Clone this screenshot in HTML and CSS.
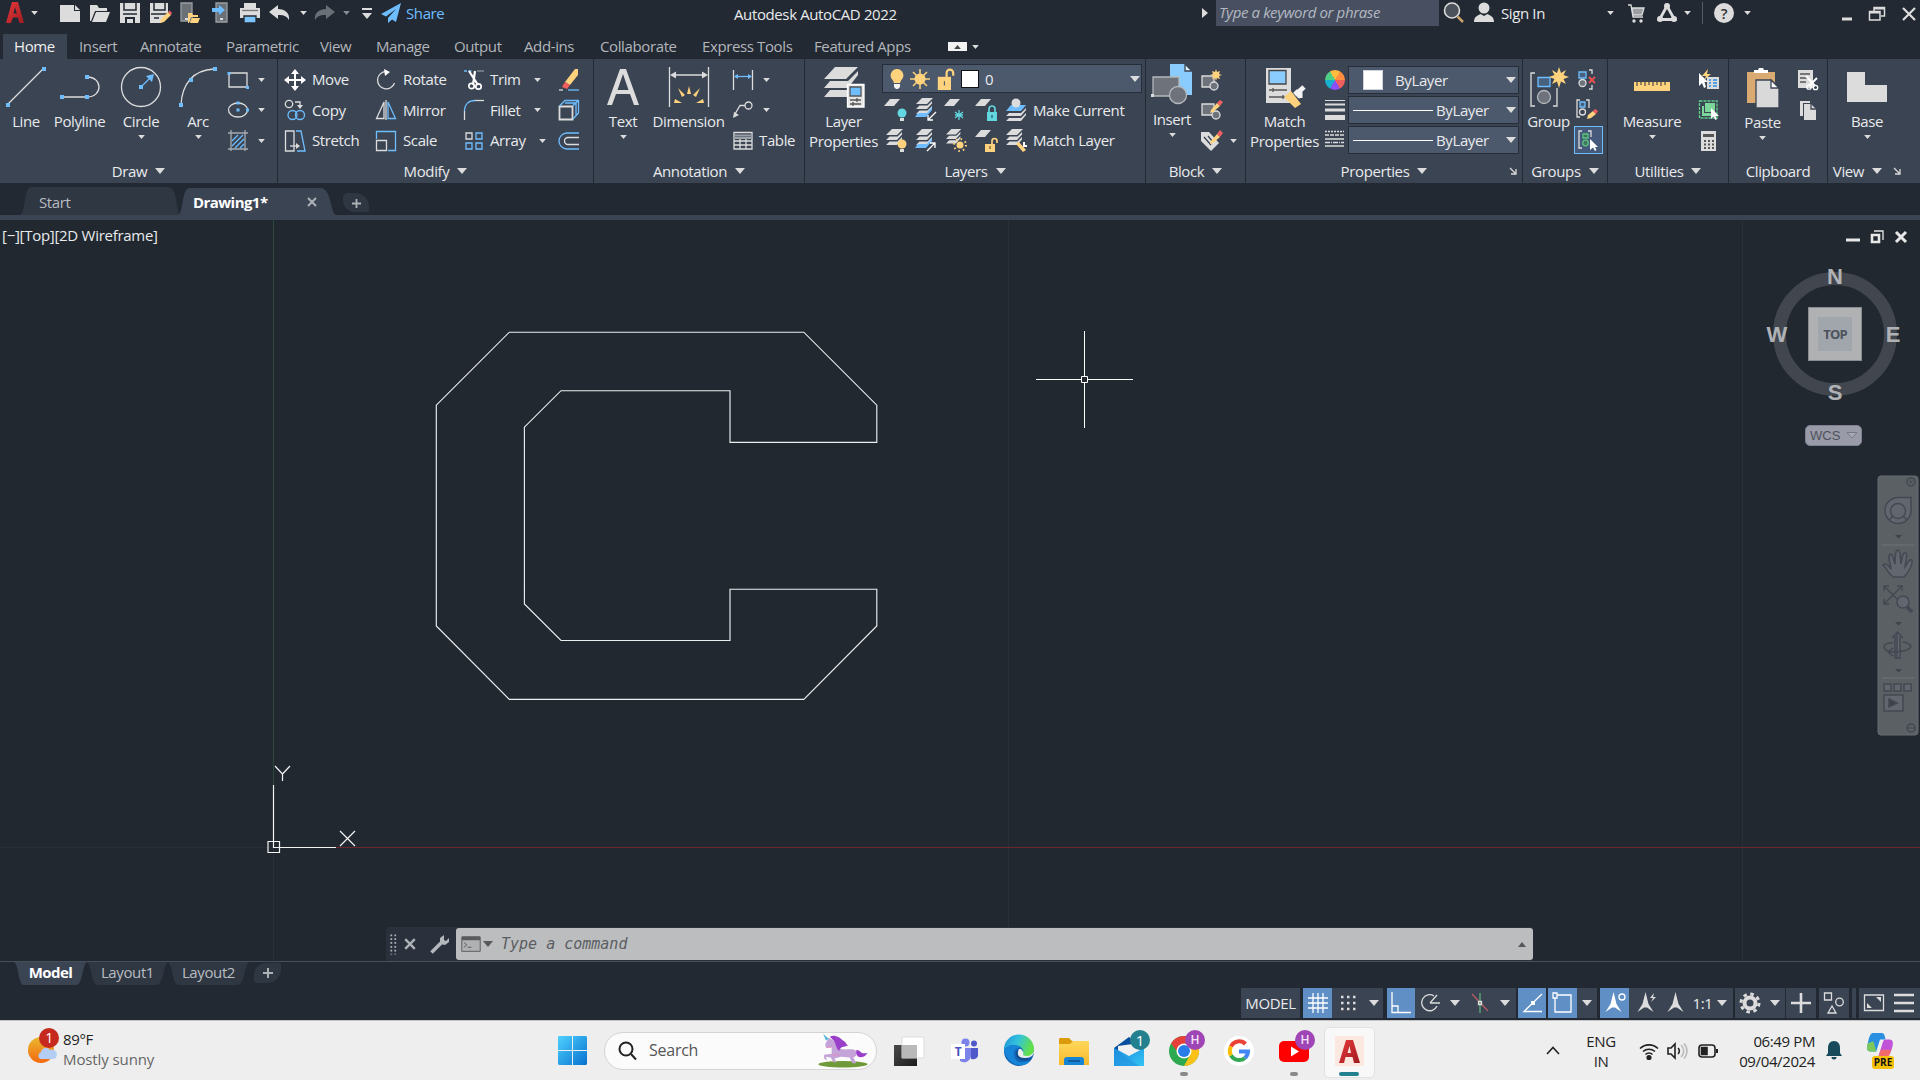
FILE: index.html
```html
<!DOCTYPE html>
<html lang="en">
<head>
<meta charset="utf-8">
<title>Autodesk AutoCAD 2022</title>
<link rel="stylesheet" href="styles.css">
</head>
<body>
<svg class="defs" width="0" height="0">
  <defs>
    <linearGradient id="gRed" x1="0" y1="0" x2="1" y2="1"><stop offset="0" stop-color="#e8383a"/><stop offset="1" stop-color="#a01c22"/></linearGradient>
    <linearGradient id="gWin" x1="0" y1="0" x2="1" y2="1"><stop offset="0" stop-color="#4fd2ff"/><stop offset="1" stop-color="#0670cf"/></linearGradient>
    <linearGradient id="gSun" x1="0" y1="0" x2="0" y2="1"><stop offset="0" stop-color="#e9b92f"/><stop offset="1" stop-color="#f4690f"/></linearGradient>
    <linearGradient id="gEdge" x1="0" y1="0" x2="1" y2="0.3"><stop offset="0" stop-color="#1d8fd8"/><stop offset=".5" stop-color="#34c3dd"/><stop offset="1" stop-color="#62e04a"/></linearGradient>
    <linearGradient id="gFold" x1="0" y1="0" x2="0" y2="1"><stop offset="0" stop-color="#ffd85c"/><stop offset="1" stop-color="#f8b92c"/></linearGradient>
    <linearGradient id="gMail" x1="0" y1="0" x2="1" y2="1"><stop offset="0" stop-color="#1a8fe0"/><stop offset="1" stop-color="#35c4f3"/></linearGradient>
    <linearGradient id="gDark" x1="0" y1="0" x2="1" y2="1"><stop offset="0" stop-color="#4a4a4a"/><stop offset="1" stop-color="#1c1c1c"/></linearGradient>
  </defs>
  <symbol id="caret" viewBox="0 0 10 6"><path d="M0 0H10L5 6Z"/></symbol>
  <symbol id="sheets" viewBox="0 0 20 20"><path d="M6 0H17L11 6H0Z"/><path d="M3.500 7.500H11.500L16 3V5.500L11 11H0Z"/><path d="M3.500 12.500H11.500L16 8V10.500L11 16H0Z"/></symbol>
  <symbol id="sheet" viewBox="0 0 20 20"><path d="M6 1H16L10 8H0Z"/></symbol>
  <symbol id="lock" viewBox="0 0 16 20"><path d="M1 8H13V20H1Z"/><path d="M9 9V4.500A3 3 0 0 1 15 4.500V7" fill="none" stroke="#ffd27d" stroke-width="2"/><path d="M6.500 12H7.500V16H6.500Z" fill="#4c586c"/></symbol>
  <symbol id="bulb" viewBox="0 0 14 20"><path d="M7 0A6.500 6.500 0 0 1 11 11.500L10 14H4L3 11.500A6.500 6.500 0 0 1 7 0Z"/><path d="M4 15H10V18L8 20H6L4 18Z" fill="#f2f2f2"/></symbol>
  <symbol id="sun" viewBox="0 0 20 20"><circle cx="10" cy="10" r="5.500"/><path d="M10 0V20M0 10H20M3 3L17 17M17 3L3 17" stroke="#ffd27d" stroke-width="1.500"/></symbol>
  <symbol id="compass" viewBox="0 0 16 22"><path d="M8 0L11 12L16 20L9.500 15.500H6.500L0 20L5 12Z"/></symbol>
</svg>

<header class="titlebar">
  <div class="quick">
    <svg viewBox="0 0 18 21" class="logo"><path d="M6 0H12L18 21H13.500L12 15.500H7L5 21H0ZM9 5L7.500 11.500H10.800Z" fill="url(#gRed)"/></svg>
    <svg class="cr"><use href="#caret"/></svg>
    <svg class="i" viewBox="0 0 24 24"><path class="fw" d="M2 4H16V10H22V21H2Z"/><path class="fw" d="M17 4L22 9H17Z"/></svg>
    <svg class="i" viewBox="0 0 24 24"><path class="fw" d="M2 4H9L11 7H19V10H7L3 20H2Z"/><path class="fw" d="M8 11H22L18 21H4Z"/></svg>
    <svg class="i" viewBox="0 0 24 24"><path class="fw" d="M2 2H22V22H2Z"/><path d="M6 2V9H18V2M5 13H19" stroke="#222933" stroke-width="1.500"/><path d="M7 16H17V22H7Z" fill="#222933" stroke="none"/><path class="fw" d="M9 18H15V22H9Z"/></svg>
    <svg class="i" viewBox="0 0 24 24"><path class="fw" d="M2 2H20V12L13 22H2Z"/><path d="M6 2V9H17V2M3 13H19M6 17H11" stroke="#222933" stroke-width="1.500"/><path class="fy" d="M12 22L13 18L20 11L23 14L16 21Z"/><path fill="#f0605f" stroke="none" d="M20 11L21.500 9.500L24 12L23 14Z"/></svg>
    <svg class="i" viewBox="0 0 24 24"><path d="M3 2H14V20H3Z" fill="#6c7178" stroke="#9a9ea3"/><path class="fw" d="M7 17H10V19H7Z"/><path class="fy" d="M10 12H14L15 14H20V16H13L11 22H10Z"/><path class="fy" d="M14 17H22L20 22H12Z"/></svg>
    <svg class="i" viewBox="0 0 24 24"><path d="M7 2H18V21H7Z" fill="#6c7178" stroke="#9a9ea3"/><path class="fb" d="M3 7H10V4L16 9L10 14V11H3Z"/><path class="fw" d="M11 17H14V19H11Z"/></svg>
    <svg class="i" viewBox="0 0 24 24"><path class="fw" d="M6 2H18V7H22V17H2V7H6Z"/><path d="M4 9.500H20" stroke="#777"/><path d="M6 15H18V22H6Z" fill="#7cc4fb" stroke="#222933"/></svg>
    <svg class="i" viewBox="0 0 24 24"><path class="fw" d="M1 11L10 4V8C17 8 22 12 21 19C19 15 15 13.500 10 14V18Z"/></svg>
    <svg class="cr"><use href="#caret"/></svg>
    <svg class="i" viewBox="0 0 24 24"><path fill="#696f77" stroke="none" d="M23 11L14 4V8C7 8 2 12 3 19C5 15 9 13.500 14 14V18Z"/></svg>
    <svg class="cr dim"><use href="#caret"/></svg>
    <svg class="i" viewBox="0 0 24 24"><path d="M7 8H17" stroke-width="2"/><path class="fw" d="M7 12H17L12 18Z"/></svg>
    <svg class="i" viewBox="0 0 24 24"><path class="fb" d="M22 2L2 13L7 15.500L17 8L9 17V22L13 18.500L17 21Z"/></svg>
    <span class="share">Share</span>
  </div>
  <div class="apptitle">Autodesk AutoCAD 2022</div>
  <div class="tright">
    <svg class="tri" viewBox="0 0 6 10"><path d="M0 0L6 5L0 10Z" fill="#dcdcdc"/></svg>
    <div class="kw">Type a keyword or phrase</div>
    <svg class="i" viewBox="0 0 24 24"><circle cx="10" cy="9.500" r="7.500" fill="#4b525c" stroke-width="1.600"/><path d="M15.500 15.500L21 21" stroke="#c9a16a" stroke-width="2.500"/></svg>
    <svg class="i" viewBox="0 0 24 24"><circle class="fw" cx="12" cy="7" r="5.500"/><path class="fw" d="M2 21C2 15 7 14 8.500 13L12 15L15.500 13C17 14 22 15 22 21Z"/></svg>
    <span>Sign In</span>
    <svg class="cr"><use href="#caret"/></svg>
    <svg class="i" viewBox="0 0 24 24"><path d="M4 4H7L9 16H19" /><path d="M8 7H20L18 14H9Z" fill="#9a9ea3"/><circle class="fw" cx="10" cy="20" r="1.700"/><circle class="fw" cx="17" cy="20" r="1.700"/></svg>
    <svg class="i" viewBox="0 0 24 24"><path d="M12 5L4.500 18.500H19.500Z" stroke-width="2.800"/><circle class="fw" cx="12" cy="5" r="3"/><circle class="fw" cx="5" cy="18" r="3"/><circle class="fw" cx="19" cy="18" r="3"/></svg>
    <svg class="cr"><use href="#caret"/></svg>
    <i class="vsep"></i>
    <div class="help">?</div>
    <svg class="cr"><use href="#caret"/></svg>
    <svg class="i" viewBox="0 0 24 24"><path d="M7 18H17" stroke-width="3"/></svg>
    <svg class="i" viewBox="0 0 24 24"><path d="M9 10V6.500H19.500V15H16M4.500 10.500H15V19H4.500Z" stroke-width="1.500"/><path d="M4.500 11.500H15M9 7.500H19" stroke-width="2"/></svg>
    <svg class="i" viewBox="0 0 24 24"><path d="M6 7L18 19M18 7L6 19" stroke-width="2.200"/></svg>
  </div>
</header>

<nav class="tabs">
  <b>Home</b><span>Insert</span><span>Annotate</span><span>Parametric</span><span>View</span><span>Manage</span><span>Output</span><span>Add-ins</span><span>Collaborate</span><span>Express Tools</span><span>Featured Apps</span>
  <div class="min"><svg class="cr up"><use href="#caret"/></svg></div><svg class="cr"><use href="#caret"/></svg>
</nav>

<section class="ribbon">
  <div class="panel draw">
    <div class="body">
      <div class="big"><svg viewBox="0 0 42 42"><path d="M2.500 38.500L38.500 2.500"/><path class="fb" d="M1 37h4v4h-4zM37 1h4v4h-4z"/></svg><span>Line</span></div>
      <div class="big"><svg viewBox="0 0 42 42"><path d="M3 31H28C44 31 44 11 28 11"/><path class="fb" d="M1 29h4v4h-4zM26 29h4v4h-4zM26 9h4v4h-4z"/></svg><span>Polyline</span></div>
      <div class="big"><svg viewBox="0 0 42 42"><circle cx="21" cy="21" r="19.500"/><path class="b" d="M21 21L32 10"/><path class="fb" d="M19 19h4v4h-4zM34 8L26 10L32 16Z"/></svg><span>Circle</span><svg class="cr"><use href="#caret"/></svg></div>
      <div class="big"><svg viewBox="0 0 42 42"><path d="M4 39C5 18 16 4 37 3"/><path class="fb" d="M2 37h4v4h-4zM36 1h4v4h-4zM12 12h4v4h-4z"/></svg><span>Arc</span><svg class="cr"><use href="#caret"/></svg></div>
      <div class="rows">
        <div><svg class="i" viewBox="0 0 24 24"><path d="M3 5H21V19H3Z"/><path class="fb" d="M1.500 4h3v3h-3zM20 18h3v3h-3z"/></svg><svg class="cr"><use href="#caret"/></svg></div>
        <div><svg class="i" viewBox="0 0 24 24"><ellipse cx="12" cy="12" rx="9.500" ry="7"/><path class="fb" d="M10.500 10.500h3v3h-3zM20 10.500h3v3h-3zM10.500 3.500h3v3h-3z"/></svg><svg class="cr"><use href="#caret"/></svg></div>
        <div><svg class="i" viewBox="0 0 24 24"><path d="M5 1V22M19 1V22M2 4H22M2 20H22" stroke="#a6abb2"/><path class="b" d="M6 12L12 6M6 17L17 6M9 19L18 10M14 19L18 15"/></svg><svg class="cr"><use href="#caret"/></svg></div>
      </div>
    </div>
    <div class="name">Draw<svg class="cr"><use href="#caret"/></svg></div>
  </div>

  <div class="panel modify">
    <div class="body">
      <div class="rows">
        <div><svg class="i" viewBox="0 0 24 24"><path d="M12 4V20M4 12H20" stroke="#fff" stroke-width="2"/><path fill="#fff" stroke="none" d="M12 1L16 6H8ZM12 23L16 18H8ZM1 12L6 8V16ZM23 12L18 8V16Z"/></svg><span>Move</span></div>
        <div><svg class="i" viewBox="0 0 24 24"><circle cx="6" cy="6" r="3.700"/><circle class="b" cx="9.500" cy="17" r="4.500"/><circle class="b" cx="17" cy="17" r="4.500"/><path d="M12 4H17V8"/><path class="fw" d="M14 7H20L17 11Z"/></svg><span>Copy</span></div>
        <div><svg class="i" viewBox="0 0 24 24"><path d="M2.500 2H11V22H2.500Z"/><path class="b" d="M13 2H18L22 22H14"/><path d="M7 17H14" /><path class="fw" d="M13 14L17 17L13 20Z"/></svg><span>Stretch</span></div>
      </div>
      <div class="rows">
        <div><svg class="i" viewBox="0 0 24 24"><path d="M12 3.500A8.700 8.700 0 1 0 20.500 15"/><path d="M10 1L16 4L11 8Z" fill="#fff" stroke="none"/></svg><span>Rotate</span></div>
        <div><svg class="i" viewBox="0 0 24 24"><path d="M10 4V20.500H2.500Z"/><path class="b" d="M14 4V20.500H21.500Z"/><path d="M12 2V22"/></svg><span>Mirror</span></div>
        <div><svg class="i" viewBox="0 0 24 24"><path class="b" d="M2.500 10V2.500H21.500V21.500H14"/><path d="M2.500 11.500H12.500V21.500H2.500Z"/></svg><span>Scale</span></div>
      </div>
      <div class="rows">
        <div><svg class="i" viewBox="0 0 24 24"><path class="b" d="M2 3H10" stroke-dasharray="3 1.500"/><path d="M15 3H22" stroke="#8f959d"/><path d="M7 3L16 17M13 3L11 17" stroke="#fff" stroke-width="2.200"/><circle cx="9.500" cy="18" r="2.700" stroke="#fff" stroke-width="1.700"/><circle cx="16.500" cy="18.500" r="2.700" stroke="#fff" stroke-width="1.700"/></svg><span>Trim</span><svg class="cr"><use href="#caret"/></svg></div>
        <div><svg class="i" viewBox="0 0 24 24"><path d="M2.500 22V13"/><path class="b" d="M2.500 13C2.500 6 7 2.500 13 2.500"/><path d="M13 2.500H22"/></svg><span>Fillet</span><svg class="cr"><use href="#caret"/></svg></div>
        <div><svg class="i" viewBox="0 0 24 24"><path d="M4 4h6v6h-6z"/><path class="b" d="M14 4h6v6h-6zM4 14h6v6h-6zM14 14h6v6h-6z"/></svg><span>Array</span><svg class="cr"><use href="#caret"/></svg></div>
      </div>
      <div class="rows">
        <div><svg class="i" viewBox="0 0 24 24"><path class="fy" d="M21 1V7L13 17L8 14L18 1Z"/><path fill="#f0605f" stroke="none" d="M8 14L13 17L10 21L5 19Z"/><path d="M2 22H6"/><path class="b" d="M11 22H22"/></svg></div>
        <div><svg class="i" viewBox="0 0 24 24"><path d="M2.500 8.500H15.500V21.500H2.500Z" stroke-width="1.800"/><path class="b" d="M2.500 8L8 2.500H21.500V15L16 21M15.500 8L21 3M8 5H19V17"/></svg></div>
        <div><svg class="i" viewBox="0 0 24 24"><path class="b" d="M22 4H10A8 8 0 0 0 10 20H22"/><path d="M22 8.500H11A3.500 3.500 0 0 0 11 15.500H22"/></svg></div>
      </div>
    </div>
    <div class="name">Modify<svg class="cr"><use href="#caret"/></svg></div>
  </div>

  <div class="panel annot">
    <div class="body">
      <div class="big"><svg viewBox="0 0 42 42"><path class="fw" d="M18 3H24L37 39H32L28 28H14L10 39H5ZM21 8L15.500 24H26.500Z"/></svg><span>Text</span><svg class="cr"><use href="#caret"/></svg></div>
      <div class="big"><svg viewBox="0 0 42 42"><path d="M1.500 1V41M40.500 1V41M4 9H38"/><path class="fw" d="M2 9L8 5.500V12.500ZM40 9L34 5.500V12.500Z"/><path class="fy" d="M19 28L21 20L23 28ZM10 22L17 29L14 31ZM32 22L25 29L28 31ZM6 37L7 33L14 37ZM36 37L35 33L28 37Z"/></svg><span>Dimension</span></div>
      <div class="rows">
        <div><svg class="i" viewBox="0 0 24 24"><path d="M2.500 2V22M21.500 2V22"/><path class="b" d="M4 8.500H20"/><path class="fb" d="M3 8.500L7 6V11ZM21 8.500L17 6V11Z"/></svg><svg class="cr"><use href="#caret"/></svg></div>
        <div><svg class="i" viewBox="0 0 24 24"><path d="M4 16L9 7.500H14"/><circle cx="17.500" cy="7.500" r="3.500"/><path class="fw" d="M2 20L3 14L8 17Z"/></svg><svg class="cr"><use href="#caret"/></svg></div>
        <div><svg class="i" viewBox="0 0 24 24"><path d="M3 3.500H21V20H3ZM3 12H21M3 16H21M9 9V20M15 9V20"/><path d="M3 6.500H21M3 9H21" stroke-width="2" stroke="#9ba1a8"/></svg><span>Table</span></div>
      </div>
    </div>
    <div class="name">Annotation<svg class="cr"><use href="#caret"/></svg></div>
  </div>

  <div class="panel layers">
    <div class="body">
      <div class="big two"><svg viewBox="0 0 42 42"><g class="fw"><path d="M12 1H35L23 13H1Z"/><path d="M7 15H25L35 5V9L25 22H1Z"/><path d="M7 24H24V31H1Z"/></g><path d="M24.500 18.500H41V41H24.500Z" fill="#e4e4e4" stroke="#fff"/><path d="M27 21H38V30H27Z" fill="#6ebeff" stroke="#555"/><path d="M27 34H38M27 38H38M34 32V36M30 36V40" stroke="#555"/></svg><span>Layer<br>Properties</span></div>
      <div class="laycol">
        <div class="combo">
          <svg class="fyi" width="14" height="20"><use href="#bulb"/></svg>
          <svg class="fyi" width="20" height="20"><use href="#sun"/></svg>
          <svg class="fyi" width="19" height="22"><use href="#lock"/></svg>
          <i class="sw"></i><span>0</span><svg class="cr lg"><use href="#caret"/></svg>
        </div>
        <div class="lrow">
          <svg class="i" viewBox="0 0 24 24"><use class="fw" href="#sheet" width="20" height="20"/><circle cx="18" cy="15" r="4.500" fill="#62d7df" stroke="none"/><path d="M16 20h4v3h-4z" class="fw"/></svg>
          <svg class="i" viewBox="0 0 24 24"><use class="fw" href="#sheets" x="2" width="20" height="20"/><path class="fb" d="M4 15H13L18 9V12L12 19H1Z"/><path d="M22 14L14 22M14 17V22H19" stroke="#fff"/></svg>
          <svg class="i" viewBox="0 0 24 24"><use class="fw" href="#sheet" width="20" height="20"/><path d="M15 12V22M11 14L19 20M19 14L11 20M11 17H19" stroke="#62d7df"/></svg>
          <svg class="i" viewBox="0 0 24 24"><use class="fw" href="#sheet" width="20" height="20"/><path d="M12 14H22V23H12Z" fill="#62d7df" stroke="none"/><path d="M14 14V11A3 3 0 0 1 20 11V14" stroke="#62d7df" stroke-width="1.700"/><path d="M17 17V20" stroke="#2e5f68"/></svg>
          <svg class="i" viewBox="0 0 24 24"><path class="fb" d="M7 7H22L17 13H2Z"/><path class="fw" d="M5 15H17L22 10V12L17 18H2ZM5 20H17L22 15V17L17 23H2Z"/><circle cx="12" cy="5" r="4.500" class="fw"/></svg>
          <span>Make Current</span>
        </div>
        <div class="lrow">
          <svg class="i" viewBox="0 0 24 24"><use class="fw" href="#sheets" x="2" width="20" height="20"/><circle class="fy" cx="18" cy="15" r="4.500"/><path d="M16 20h4v3h-4z" class="fw"/></svg>
          <svg class="i" viewBox="0 0 24 24"><use class="fw" href="#sheets" x="2" width="20" height="20"/><path class="fb" d="M4 15H13L18 9V12L12 19H1Z"/><path d="M13 22L21 14M16 14H21V19" stroke="#fff"/></svg>
          <svg class="i" viewBox="0 0 24 24"><use class="fw" href="#sheets" x="2" width="18" height="18"/><circle class="fy" cx="16" cy="16" r="3.500"/><circle cx="16" cy="16" r="6" stroke="#ffd27d" stroke-width="2" stroke-dasharray="1.500 3.200"/></svg>
          <svg class="i" viewBox="0 0 24 24"><use class="fw" href="#sheet" width="20" height="20"/><path class="fy" d="M10 15H20V23H10Z"/><path d="M17 15V12A2.500 2.500 0 0 1 22 12V14" stroke="#ffd27d" stroke-width="1.700"/><path d="M15 17V20" stroke="#6b5a3b"/></svg>
          <svg class="i" viewBox="0 0 24 24"><use class="fw" href="#sheets" x="2" width="20" height="20"/><path d="M20 13V17H23" stroke="#fff" stroke-width="2"/><path class="fy" d="M12 15L15 13L22 21L19 23Z"/></svg>
          <span>Match Layer</span>
        </div>
      </div>
    </div>
    <div class="name">Layers<svg class="cr"><use href="#caret"/></svg></div>
  </div>

  <div class="panel block">
    <div class="body">
      <div class="big"><svg viewBox="0 0 42 42"><path d="M19 0H34L41 7V31H19Z" fill="#8accfd" stroke="none"/><path d="M34 0V7H41Z" fill="#d9eefd" stroke="#3b4453"/><path d="M2 13H28V32H2Z" fill="#6d727b" stroke="#b5b8bc"/><circle cx="27" cy="31" r="8.500" fill="#6d727b" stroke="#b5b8bc"/><path class="fw" d="M0 30h3v3h-3z"/></svg><span>Insert</span><svg class="cr"><use href="#caret"/></svg></div>
      <div class="rows">
        <div><svg class="i" viewBox="0 0 24 24"><path d="M3 8H15V19H3Z" fill="#6d727b"/><circle cx="15" cy="18" r="4" fill="#6d727b"/><path class="fy" d="M17 1L18 4L21 3L20 6L23 7L20 8L21 11L18 10L17 13L16 10L13 11L14 8L11 7L14 6L13 3L16 4Z"/></svg></div>
        <div><svg class="i" viewBox="0 0 24 24"><path d="M3 6H15V17H3Z" fill="#6d727b"/><circle cx="17" cy="17" r="4" fill="#6d727b"/><path class="fy" d="M12 12L18 5L21 8L14 14L11 15Z"/><path fill="#f0605f" stroke="none" d="M18 5L21 2L24 4L21 8Z"/></svg></div>
        <div><svg class="i" viewBox="0 0 24 24"><path class="fw" d="M2 3H10L20 14L12 22L2 12Z"/><path d="M5 8L12 16M9 7L14 13" stroke="#3b4453"/><path class="fy" d="M12 12L18 5L21 8L14 14L11 15Z"/><path fill="#f0605f" stroke="none" d="M18 5L21 1L24 4L21 8Z"/></svg><svg class="cr"><use href="#caret"/></svg></div>
      </div>
    </div>
    <div class="name">Block<svg class="cr"><use href="#caret"/></svg></div>
  </div>

  <div class="panel props">
    <div class="body">
      <div class="big two"><svg viewBox="0 0 42 42"><path class="fw" d="M2 2H27V37H2Z"/><path d="M5 4.500H22V18H5Z" fill="#8accfd" stroke="#444"/><path d="M5 24H23M5 31H23M9 22V26M19 29V33" stroke="#555"/><path d="M31 29L40 21M31 25L37 31M36 24V32" stroke="#f2f2f2" stroke-width="5"/><path class="fy" d="M20 31L27 25L37 38L31 42Z"/></svg><span>Match<br>Properties</span></div>
      <div class="rows">
        <div><i class="wheel"></i></div>
        <div><svg class="i" viewBox="0 0 24 24"><path d="M2 2.500H22" stroke-width="1"/><path d="M2 6.500H22" stroke-width="2"/><path d="M2 12H22" stroke-width="3"/><path d="M2 19.500H22" stroke-width="5"/></svg></div>
        <div><svg class="i" viewBox="0 0 24 24"><path d="M2 2.500H21" stroke-dasharray="2 1"/><path d="M2 6H21" stroke-dasharray="4 1"/><path d="M2 10H21M2 17H21"/><path d="M2 13.500H21" stroke-dasharray="5 1 1 1"/></svg></div>
      </div>
      <div class="pcombos">
        <div class="combo"><i class="sw"></i><span>ByLayer</span><svg class="cr lg"><use href="#caret"/></svg></div>
        <div class="combo"><i class="ln"></i><span>ByLayer</span><svg class="cr lg"><use href="#caret"/></svg></div>
        <div class="combo"><i class="ln"></i><span>ByLayer</span><svg class="cr lg"><use href="#caret"/></svg></div>
      </div>
    </div>
    <div class="name">Properties<svg class="cr"><use href="#caret"/></svg><svg class="launch" viewBox="0 0 8 8"><path d="M1 1L6 6M7 2V7H2"/></svg></div>
  </div>

  <div class="panel groups">
    <div class="body">
      <div class="big"><svg viewBox="0 0 42 42"><path d="M7 7H3V40H7M25 40H29V22"/><path class="b" d="M10 11.500H22V20.500H10Z" fill="#47617f"/><circle cx="16" cy="31" r="6.500" fill="#6d727b" stroke="#b5b8bc"/><path class="fy" d="M31 1L33 7L38 4L35.500 9L41 11L35.500 13L38 18L33 15.500L31 22L29 15.500L24 18L26.500 13L21 11L26.500 9L24 4L29 7Z"/></svg><span>Group</span></div>
      <div class="rows">
        <div><svg class="i" viewBox="0 0 24 24"><path class="b" d="M4 4H11V10H4Z" fill="#47617f"/><circle cx="7.500" cy="15" r="3.500" fill="#6d727b"/><path d="M14 2H17V6M14 21H17V17"/><path d="M14 9L20 15M20 9L14 15" stroke="#e8504f" stroke-width="2"/></svg></div>
        <div><svg class="i" viewBox="0 0 24 24"><path d="M5 2H2V19H5M11 2H14V10"/><path class="b" d="M5 4H10V9H5Z" fill="#47617f"/><circle cx="7.500" cy="14" r="3"/><path class="fy" d="M12 21L13 17L18 13L21 16L16 20Z"/><path fill="#f0605f" stroke="none" d="M18 13L20 11L23 13L21 16Z"/></svg></div>
        <div class="on"><svg class="i" viewBox="0 0 24 24"><path d="M6 3H3V20H6M12 3H15V9"/><path d="M7 6H12V10H7Z" stroke="#5cc27f" fill="#3e7560"/><circle cx="9.500" cy="15" r="2.800" stroke="#5cc27f" fill="#3e7560"/><path fill="#fff" stroke="none" d="M14 11V22L17 19.500L19 23L20.500 22L19 19H22Z"/></svg></div>
      </div>
    </div>
    <div class="name">Groups<svg class="cr"><use href="#caret"/></svg></div>
  </div>

  <div class="panel utils">
    <div class="body">
      <div class="big"><svg viewBox="0 0 42 42"><path class="fy" d="M3 16H39V25H3Z"/><path d="M6 16V20M10 16V19M14 16V20M18 16V19M22 16V20M26 16V19M30 16V20M34 16V19" stroke="#5b5343"/></svg><span>Measure</span><svg class="cr"><use href="#caret"/></svg></div>
      <div class="rows">
        <div><svg class="i" viewBox="0 0 24 24"><path class="fy" d="M11 1L5 8H9L7 12L14 6H10Z"/><path fill="#fff" stroke="none" d="M2 5V18L5 15L7 20L9 19L7.500 14H11Z"/><path class="fw" d="M10 9H22V21H10Z"/><path d="M12 12H14M12 15H14M12 18H14M16 12H20M16 15H20M16 18H20" stroke="#2d8ae0"/></svg></div>
        <div><svg class="i" viewBox="0 0 24 24"><path d="M2.500 3H20V20H2.500Z" stroke="#5fd08a" stroke-dasharray="3 1"/><path fill="#7cd69a" stroke="none" d="M8 5H18V14H8ZM5 8H7V15H15V18H5Z"/><path fill="#fff" stroke="none" d="M14 10V21L16.500 18.500L18.500 22L20 21L18.500 18H22Z"/></svg></div>
        <div><svg class="i" viewBox="0 0 24 24"><path class="fw" d="M4 2H19V22H4Z"/><path d="M6 5H17V8H6Z" fill="#555" stroke="none"/><path d="M7 12H17M7 15.500H17M7 19H17" stroke="#555" stroke-width="2" stroke-dasharray="2 2"/></svg></div>
      </div>
    </div>
    <div class="name">Utilities<svg class="cr"><use href="#caret"/></svg></div>
  </div>

  <div class="panel clip">
    <div class="body">
      <div class="big"><svg viewBox="0 0 42 42"><path d="M5 5H33V36H5Z" fill="#d9ab72" stroke="none"/><path d="M12 6V3H16L17 1H21L22 3H26V6Z" fill="#fff" stroke="none"/><path d="M14 13H29L37 21V41H14Z" fill="#d9d9d9" stroke="#3b4453" /><path d="M29 13V21H37Z" fill="#fff" stroke="#3b4453"/></svg><span>Paste</span><svg class="cr"><use href="#caret"/></svg></div>
      <div class="rows">
        <div><svg class="i" viewBox="0 0 24 24"><path class="fw" d="M2 2H17V20H2Z"/><path d="M4 6H14M4 10H12M4 14H10" stroke="#555"/><path d="M10 8L19 18M21 10L13 18" stroke="#fff" stroke-width="2"/><circle cx="13" cy="19" r="2.200" stroke="#fff"/><circle cx="19.500" cy="19.500" r="2.200" stroke="#fff"/></svg></div>
        <div><svg class="i" viewBox="0 0 24 24"><path class="fw" d="M4 3H14V5H7V18H4Z"/><path class="fw" d="M8 6H15L20 11V22H8Z"/><path d="M15 6V11H20" stroke="#3b4453"/></svg></div>
      </div>
    </div>
    <div class="name">Clipboard</div>
  </div>

  <div class="panel view">
    <div class="body">
      <div class="big"><svg viewBox="0 0 42 42"><path class="fw" d="M1 6H19V19H41V36H1Z"/></svg><span>Base</span><svg class="cr"><use href="#caret"/></svg></div>
    </div>
    <div class="name">View<svg class="cr"><use href="#caret"/></svg><svg class="launch" viewBox="0 0 8 8"><path d="M1 1L6 6M7 2V7H2"/></svg></div>
  </div>
</section>

<div class="filetabs">
  <div class="ft start">Start</div>
  <div class="ft cur"><b>Drawing1*</b><svg class="x" viewBox="0 0 10 10"><path d="M1 1L9 9M9 1L1 9"/></svg></div>
  <div class="ft add"><svg class="x" viewBox="0 0 10 10"><path d="M5 0V10M0 5H10"/></svg></div>
</div>

<main class="stage">
  <svg class="drawing" viewBox="0 220 1920 741">
    <path d="M273.500 848V961M0 847.500H273M1008.500 220V961M1742.500 220V961" stroke="#282f3b"/>
    <path d="M273.500 220V848" stroke="#2b4a39"/>
    <path d="M273 847.500H1920" stroke="#6b272c"/>
    <path d="M509.300 332.200H803.800L876.800 405.200V442.300H730V390.700H561L524.400 427.200V604L561 640.500H730V589.200H876.800V626L803.800 699.300H509.300L436.300 626V405.200Z" stroke="#eceef0" stroke-width="1.150"/>
    <path d="M1084.500 331V428M1036 379.500H1133" stroke="#fff"/>
    <path d="M1081.500 376.500h6v6h-6z" stroke="#fff" fill="#212830"/>
    <path d="M273.500 785V847.500H336M268 841.500h11.500v11h-11.500z" stroke="#f4f4f4" stroke-width="1.200"/>
    <path d="M275 766L282.500 774V781M290 766L282.500 774M340 831L355 846M355 831L340 846" stroke="#f4f4f4" stroke-width="1.200"/>
  </svg>
  <div class="vplabel">[−][Top][2D Wireframe]</div>
  <div class="vpctl">
    <svg viewBox="0 0 14 14"><path d="M0 10H14" stroke-width="3"/></svg>
    <svg viewBox="0 0 14 14"><path d="M2 5H9V12H2Z" stroke-width="2.600"/><path d="M4 1H13V10" stroke-width="1.300"/></svg>
    <svg viewBox="0 0 14 14"><path d="M2 2L12 12M12 2L2 12" stroke-width="3"/></svg>
  </div>
  <div class="cube"><i class="ring"></i><b class="n">N</b><b class="s">S</b><b class="w">W</b><b class="e">E</b><div class="face"><span>TOP</span></div></div>
  <div class="wcs">WCS<svg viewBox="0 0 12 7"><path d="M1 .5H11L6 6Z"/></svg></div>
  <svg class="navbar" viewBox="0 0 40 259">
    <rect width="40" height="259" rx="3" fill="#5b6064" stroke="#696d72" />
    <g fill="none" stroke="#434852" stroke-width="1.500">
      <circle cx="33" cy="6" r="4"/><path d="M31 4L35 8M35 4L31 8" stroke-width="1"/>
      <path d="M20 21.500H33V35A13 13 0 1 1 20 21.500Z" fill="#62666f"/><circle cx="20" cy="35" r="7.500"/><path d="M11 44L15 40M29 44L25 40"/>
      <path d="M4 69H36M4 202H36" stroke="#6e7277" stroke-width="1"/>
      <path d="M15 101C9 97 8 90 5 89C7 86 11 90 13 93C12 86 9 79 13 78C15 79 16 86 17 88C17 82 17 74 20 74C23 74 22 82 23 88C24 82 25 75 28 77C30 79 27 87 27 91C29 88 32 82 34 84C35 89 30 97 26 101Z" fill="#62666f"/>
      <path d="M6 110L24 128M24 110L6 128M6 115V110H11M19 110H24V115M6 123V128H11"/><circle cx="25" cy="126" r="6" fill="#62666f"/><path d="M29 131L34 136" stroke-width="3.500"/>
      <path d="M19 156V183M15 161L19.500 156L24 161H22V182H17V161Z" fill="#62666f"/><path d="M15 176C3 175 3 166 15 167M25 166C37 168 37 176 11 176M15 172L10 176L15 180"/>
      <path d="M6 208h7v7h-7zM16 208h7v7h-7zM26 208h7v7h-7zM6 219h19v16h-19z" fill="#62666f"/><path d="M11 223V231L19 227Z" fill="#3d424c"/>
      <circle cx="33" cy="252" r="4"/><path d="M30 252H36" stroke-width="1"/>
    </g>
    <path d="M17 59H24L20.500 62.500ZM17 146H24L20.500 149.500ZM17 193H24L20.500 196.500Z" fill="#3d424c"/>
  </svg>
  <div class="cmd">
    <svg class="grip" viewBox="0 0 8 24"><path d="M1.500 1V24M6 1V24"/></svg>
    <svg class="x" viewBox="0 0 10 10"><path d="M1 1L9 9M9 1L1 9"/></svg>
    <svg class="wrench" viewBox="0 0 20 20"><path d="M1.500 18.500L11 9" stroke="#b4b7bb" stroke-width="3.500"/><path d="M10 10V4L14 1V6L16 7L19 4V8L15 11Z" fill="#b4b7bb"/></svg>
    <div class="prompt">
      <svg class="term" viewBox="0 0 21 17"><path d="M.7 1H20.300V16.300H.7Z" fill="#b0b1b3" stroke="#595b5e"/><path d="M1 2.500H20" stroke="#595b5e" stroke-width="4"/><path d="M3 7L6 9.500L3 12M7 12H11" stroke="#595b5e"/></svg>
      <svg class="cr dk"><use href="#caret"/></svg>
      <span>Type a command</span>
      <svg class="cr dk up"><use href="#caret"/></svg>
    </div>
  </div>
</main>

<footer class="bottom">
  <div class="laytabs"><b>Model</b><span>Layout1</span><span>Layout2</span><em><svg class="x" viewBox="0 0 10 10"><path d="M5 0V10M0 5H10"/></svg></em></div>
  <div class="status">
    <div class="s1">MODEL</div>
    <div class="s2 hot"><svg class="i" viewBox="0 0 24 24"><path d="M7 2V22M12 2V22M17 2V22M2 7H22M2 12H22M2 17H22"/></svg></div>
    <div class="s3"><svg class="i" viewBox="0 0 24 24"><path d="M5 6H19.500M5 12H19.500M5 18H19.500" stroke-width="2.500" stroke-dasharray="2.500 3.500"/></svg><svg class="cr lg"><use href="#caret"/></svg></div>
    <div class="s4 hot"><svg class="i" viewBox="0 0 24 24"><path d="M3 1V21.500H22M3 15H9V21"/></svg></div>
    <div class="s5"><svg class="i" viewBox="0 0 24 24"><path d="M19 15A8 8 0 1 1 16 5M12 12H22M12 12L19 4" /></svg><svg class="cr lg"><use href="#caret"/></svg><svg class="i" viewBox="0 0 24 24"><path d="M4 3L20 20" stroke="#b85c62"/><path d="M12 2V22" stroke="#5fae7a"/><path d="M10.500 10.500h3v3h-3z"/></svg><svg class="cr lg"><use href="#caret"/></svg></div>
    <div class="s6 hot"><svg class="i" viewBox="0 0 24 24"><path d="M22 3L4 20.500H22"/><path fill="#fff" stroke="none" d="M11 10h4v4h-4z"/></svg></div>
    <div class="s7 hot"><svg class="i" viewBox="0 0 24 24"><path d="M7 4H21V21H5V7M3 2h4v5h-4z"/></svg></div>
    <div class="s8"><svg class="cr lg"><use href="#caret"/></svg></div>
    <div class="s9 hot"><svg class="i" viewBox="0 0 24 24"><use href="#compass" x="2" y="1" width="17" height="22" fill="#fff" stroke="none"/><circle cx="19" cy="6" r="3"/></svg></div>
    <div class="s10"><svg class="i" viewBox="0 0 24 24"><use class="fw" href="#compass" x="2" y="1" width="17" height="22"/><path class="fw" d="M19 2L15 7H18L16 11L21 6H18Z"/></svg><svg class="i" viewBox="0 0 24 24"><use class="fw" href="#compass" x="3" y="1" width="17" height="22"/></svg><span>1:1</span><svg class="cr lg"><use href="#caret"/></svg></div>
    <div class="s11"><svg class="i" viewBox="0 0 24 24"><circle cx="12" cy="12" r="5.500" stroke-width="4"/><circle cx="12" cy="12" r="9" stroke-width="3" stroke-dasharray="3.500 3.570"/></svg><svg class="cr lg"><use href="#caret"/></svg></div>
    <div class="s12"><svg class="i" viewBox="0 0 24 24"><path d="M12 2V22M2 12H22" stroke-width="2.600"/></svg></div>
    <div class="s13"><svg class="i" viewBox="0 0 24 24"><path d="M3.500 2h7v7h-7zM11 15L15 22H7Z"/><circle cx="18.500" cy="11" r="3.800"/></svg></div>
    <div class="s14"></div>
    <div class="s15"><svg class="i" viewBox="0 0 24 24"><path d="M2.500 4H21.500V19.500H2.500Z"/><path class="fw" d="M19 6V11L14 6ZM5 17V12L10 17Z"/></svg><svg class="i" viewBox="0 0 24 24"><path d="M2 4H22M2 12H22M2 20H22" stroke-width="2.600"/></svg></div>
  </div>
</footer>

<div class="taskbar">
  <div class="weather">
    <svg viewBox="0 0 34 36"><circle cx="14" cy="22" r="13" fill="url(#gSun)"/><path d="M13 31A4 4 0 0 1 14 24A5 5 0 0 1 23 22A4.500 4.500 0 0 1 27 31Z" fill="#b4cdf5"/><circle cx="22" cy="10" r="10" fill="#c62a1f"/><text x="22" y="15">1</text></svg>
    <div><span>89°F</span><small>Mostly sunny</small></div>
  </div>
  <svg class="win" viewBox="0 0 29 29"><path fill="url(#gWin)" d="M1 0H14V14H0V1A1 1 0 0 1 1 0ZM15 0H28L29 1V14H15ZM0 15H14V29H1L0 28ZM15 15H29V28L28 29H15Z"/></svg>
  <div class="search">
    <svg class="mag" viewBox="0 0 20 20"><circle cx="8" cy="8" r="6.500"/><path d="M13 13L18 18.500"/></svg><span>Search</span>
    <svg class="uni" viewBox="0 0 54 36"><ellipse cx="27" cy="32" rx="26" ry="3.500" fill="#6f9a3a"/><path d="M12 4L18 8C22 9 21 14 25 16C32 17 37 15 41 18L41 23L38 25L41 31L37 31L34 25L25 24L18 26L20 30H17L14 25L9 24L10 28L7 26V22L15 21L15 14L9 14L8 11Z" fill="#c4a3d8"/><path d="M13 3C18 0 24 4 27 7C31 9 30 12 33 12C28 14 24 13 23 18C19 15 20 10 17 7ZM41 17C47 17 44 22 53 20C50 25 43 27 41 21Z" fill="#9a3fc9"/><path d="M12 5L6 0L9 7Z" fill="#4cb8d8"/><path d="M9 14C12 15 15 14 17 12M15 22L23 22" stroke="#e38cc0" fill="none"/></svg>
  </div>
  <div class="apps">
    <div><svg viewBox="0 0 32 32"><path d="M1 10H24V31H1Z" fill="url(#gDark)"/><path d="M9 2H31V23H9Z" fill="#fff" stroke="#ddd"/><path d="M9 10H24V23H9Z" fill="#b9b9b9"/></svg></div>
    <div><svg viewBox="0 0 32 32"><circle cx="17.500" cy="7.500" r="4" fill="#7b83eb"/><circle cx="26" cy="8.500" r="3" fill="#5059c9"/><path d="M23 13H30V21A6 6 0 0 1 23 24Z" fill="#5059c9"/><path d="M12 13H23V21A7 7 0 0 1 12 26Z" fill="#7b83eb"/><path d="M3 9H17V24H3Z" fill="#fff"/><text x="10" y="21" class="tm">T</text></svg></div>
    <div><svg viewBox="0 0 32 32"><circle cx="16" cy="16" r="15" fill="#1267b8"/><path d="M1 15A15 15 0 0 1 31 14C31 20 27 22 22 21C18 20 21 18 20 15C17 9 6 8 1 15Z" fill="url(#gEdge)"/><path d="M1 16C4 8 15 9 17 13C11 12 9 19 13 25C16 29 24 27 28 25C22 34 6 32 1 16Z" fill="#1685d8"/><path d="M13 17C12 24 18 27 27 25C29 24 29 23 27 23C20 24 15 21 15 15Z" fill="#124f92"/><path d="M16 14C13 20 16 23 22 23C28 23 31 20 31 16C29 21 24 22 20 20C21 18 20 16 18 14Z" fill="#ededed"/></svg></div>
    <div><svg viewBox="0 0 32 32"><path d="M1 4C1 3 2 3 3 3H11L14 6H30V10H1Z" fill="#dc9a0d"/><path d="M1 9H12L15 6H31V30H1Z" fill="url(#gFold)"/><path d="M6 30V25A3 3 0 0 1 9 22H23A3 3 0 0 1 26 25V30Z" fill="#1684d4"/><path d="M10 26H22" stroke="#0b4f92" stroke-width="1.500"/></svg></div>
    <div><svg viewBox="0 0 32 32"><path d="M1 13L16 2L31 13V18H1Z" fill="#0a4f9e"/><path d="M5 11L27 8V16L16 22L5 17Z" fill="#f0f0f0"/><path d="M1 13V31H31V13L16 21Z" fill="url(#gMail)"/><path d="M1 13L26 31H1Z" fill="#2391e0" opacity=".6"/></svg><u class="bt">1</u></div>
    <div><svg viewBox="0 0 32 32"><circle cx="16" cy="16" r="15" fill="#2da94f"/><path d="M3 8.500A15 15 0 0 1 29 8.500H16V16H9Z" fill="#e5413a"/><path d="M29 8.500A15 15 0 0 1 16 31L22.500 19L20 9Z" fill="#fbc116"/><circle cx="16" cy="16" r="7.500" fill="#fff"/><circle cx="16" cy="16" r="6" fill="#2a7de9"/></svg><u>H</u><s></s></div>
    <div><svg viewBox="0 0 32 32"><circle cx="16" cy="16" r="15" fill="#fff"/><g fill="none" stroke-width="4"><path d="M22.500 9A9 9 0 0 0 8 11.500" stroke="#ea4335"/><path d="M8 11.500A9.500 9.500 0 0 0 8 20.500" stroke="#fbbc05"/><path d="M8 20.500A9.500 9.500 0 0 0 22 23" stroke="#34a853"/><path d="M22 23A9.500 9.500 0 0 0 25 16.500H16" stroke="#4285f4"/></g></svg></div>
    <div><svg viewBox="0 0 32 32"><rect x="1" y="6" width="30" height="21" rx="5" fill="#f00"/><path d="M13 11.500V21.500L21 16.500Z" fill="#fff"/></svg><u>H</u><s></s></div>
    <div class="act"><svg viewBox="0 0 32 32"><path d="M2 1H31V31H2Z" fill="#fbe9e1"/><path d="M13 5H20L27 28H21L19.500 22H12.500L11 28H6ZM16.500 11L14.500 18H18Z" fill="url(#gRed)"/></svg><s></s></div>
  </div>
  <div class="tray">
    <svg class="t1" viewBox="0 0 14 9"><path d="M1 8L7 1.500L13 8"/></svg>
    <div class="lang">ENG<br>IN</div>
    <svg class="t2" viewBox="0 0 20 18"><path d="M1 6.500A13 13 0 0 1 19 6.500M4 9.500A9 9 0 0 1 16 9.500M6.500 12.500A5 5 0 0 1 13.500 12.500"/><circle cx="10" cy="15.500" r="1.800" fill="#222"/></svg>
    <svg class="t3" viewBox="0 0 20 18"><path d="M1 6H4L8 2V16L4 12H1ZM11 6A4 4 0 0 1 11 12"/><path d="M14 3A8 8 0 0 1 14 15M17 1.500A11 11 0 0 1 17 16.500" stroke="#bbb"/></svg>
    <svg class="t4" viewBox="0 0 21 14"><rect x="1" y="1" width="16" height="12" rx="3"/><path d="M3.500 3.500H9V10.500H3.500Z" fill="#222"/><path d="M19 5V9" stroke-width="2"/></svg>
    <div class="clock">06:49 PM<br>09/04/2024</div>
    <svg class="t5" viewBox="0 0 16 19"><path d="M8 0C12 0 14 3 14 7V12L16 15H0L2 12V7C2 3 4 0 8 0ZM5.500 16H10.500A2.500 2.500 0 0 1 5.500 16Z"/></svg>
    <div class="copilot"><svg viewBox="0 0 30 28"><path d="M7 0H17C20 0 20 4 21 7H15L11 20H6C1 20 0 17 2 11C3 6 4 1 7 0Z" fill="#2a8fe0"/><path d="M2 11L8 9L11 20H6C1 20 0 17 2 11Z" fill="#7cc95a"/><path d="M21 7H25C30 7 29 12 28 16C26 23 24 26 21 26H13L18 10C19 8 19 7 21 7Z" fill="#c053d8"/><path d="M16 18L27 18C25 25 24 26 21 26H13Z" fill="#f26b6b"/></svg><span>PRE</span></div>
  </div>
</div>
</body>
</html>
```
FILE: styles.css
```css
* { box-sizing: border-box; }
body {
  margin: 0; width: 1920px; height: 1080px; overflow: hidden;
  background: #222933; color: #e8eaec;
  font: 15px/20px "Open Sans", "Noto Sans", sans-serif; letter-spacing: -0.38px;
  display: flex; flex-direction: column;
}
svg { display: block; flex: none; overflow: visible; }
span, b { white-space: nowrap; }
.defs { position: absolute; }
.i { width: 24px; height: 24px; fill: none; stroke: #dcdcdc; stroke-width: 1.3; }
.fw { fill: #dcdcdc; stroke: none; }
.fy { fill: #ffd27d; stroke: none; }
.fb { fill: #6ebeff; stroke: none; }
.b { stroke: #6ebeff; }
.fyi { fill: #ffd27d; }
.cr { width: 7px; height: 4px; fill: #dcdcdc; stroke: none; }
.cr.lg { width: 10px; height: 6px; }
.cr.dim { fill: #8a8f96; }
.cr.dk { width: 10px; height: 6px; fill: #55585c; }
.cr.up { transform: scaleY(-1); }
.x { fill: none; stroke: #aeb2b7; stroke-width: 2; }

/* title bar */
.titlebar { height: 34px; display: flex; flex: none; align-items: flex-start; }
.quick { width: 734px; height: 25px; display: grid; align-items: center; justify-items: start;
  grid-template-columns: 24px 34px 30px 30px 30px 30px 31px 29px 30px 32px 12px 31px 12px 24px 27px auto; }
.quick > .logo { width: 18px; height: 21px; margin-left: 6px; }
.quick > .cr { margin-left: 7px; }
.quick > .cr ~ .cr { margin-left: 0; }
.share { color: #6ebeff; }
.apptitle { width: 468px; height: 28px; line-height: 28px; white-space: nowrap; }
.tright { height: 26px; width: 718px; display: grid; align-items: center;
  grid-template-columns: 14px 226px 30px 29px 106px 17px 31px 29px 18px 12px 30px 91px 30px 32px 24px; }
.tri { width: 6px; height: 10px; }
.kw { width: 223px; height: 26px; background: #474f60; color: #b4b9c2; font-style: italic; line-height: 25px; padding-left: 3px; align-self: start; white-space: nowrap; }
.tright span { margin-top: -1px; }
.vsep { width: 1px; height: 22px; background: #515a69; }
.help { width: 20px; height: 20px; border-radius: 50%; background: #dcdcdc; color: #333; font-weight: 600; text-align: center; }

/* ribbon tabs */
.tabs { height: 25px; flex: none; display: grid; line-height: 25px; color: #b2b6bb; align-items: center;
  grid-template-columns: 79px 61px 86px 94px 56px 78px 70px 76px 102px 112px 134px 24px 10px; }
.tabs b { font-weight: 400; color: #f0f0f0; background: #3b4453; width: 64px; margin-left: 3px; padding-left: 11px; }
.min { width: 19px; height: 9px; background: #f2f2f2; display: flex; align-items: center; justify-content: center; }
.min .cr { fill: #444; }

/* ribbon */
.ribbon { height: 124px; flex: none; background: #3b4453; display: flex; }
.panel { display: flex; flex-direction: column; flex: none; border-right: 1px solid #222933; }
.body { height: 98px; padding-top: 5px; display: flex; }
.name { height: 26px; padding-top: 2px; display: flex; justify-content: center; align-items: center; gap: 8px; position: relative; }
.name .cr { width: 10px; height: 6px; }
.launch { width: 8px; height: 8px; fill: none; stroke: #dcdcdc; stroke-width: 1.3; position: absolute; right: 5px; top: 10px; }
.big { display: flex; flex-direction: column; align-items: center; text-align: center; padding-top: 2px; flex: none; height: 93px; }
.big > svg:first-child { width: 42px; height: 42px; fill: none; stroke: #dcdcdc; stroke-width: 1.3; }
.big span { margin-top: 3px; height: 20px; }
.big .cr { margin-top: 4px; }
.rows { display: grid; grid-template-rows: 31px 30px 31px; flex: none; align-content: start; }
.rows > div { display: flex; align-items: center; gap: 5px; }
.rows span, .lrow span { margin-top: -1px; }
.draw { width: 278px; }
.draw .big:nth-child(1) { width: 52px; }
.draw .big:nth-child(2) { width: 55px; }
.draw .big:nth-child(3) { width: 68px; }
.draw .big:nth-child(4) { width: 46px; }
.draw .rows { margin-left: 5px; }
.draw .rows > div { gap: 8px; }
.modify { width: 316px; }
.modify .rows:nth-child(1) { width: 91px; margin-left: 5px; }
.modify .rows:nth-child(2) { width: 88px; }
.modify .rows:nth-child(3) { width: 95px; }
.modify .rows:nth-child(3) > div { gap: 4px; }
.modify .rows:nth-child(3) .cr { margin-left: 9px; }
.annot { width: 211px; }
.annot .big:nth-child(1) { width: 58px; }
.annot .big:nth-child(2) { width: 73px; }
.annot .rows { margin-left: 6px; }
.annot .rows > div { gap: 4px; }
.annot .rows .cr { margin-left: 4px; }
.layers { width: 341px; }
.layers .big { width: 77px; }
.laycol { width: 260px; }
.combo { display: flex; align-items: center; background: #4c586c; border: 1px solid #272e39; }
.combo .cr { margin-left: auto; }
.layers .combo { height: 29px; margin-bottom: 2px; gap: 6px; padding: 0 1px 0 7px; }
.sw { width: 18px; height: 18px; background: #fff; border: 1px solid #111; }
.lrow { height: 30px; display: grid; align-items: center; grid-template-columns: 30px 30px 31px 29px 29px auto; padding-left: 2px; }
.lrow + .lrow { height: 31px; }
.block { width: 100px; }
.block .big { width: 52px; padding-top: 0; }
.block .rows > div { padding-left: 1px; gap: 7px; }
.props { width: 277px; }
.props .big { width: 77px; }
.props .rows { margin-right: 1px; }
.wheel { width: 20px; height: 20px; margin-left: 2px; border-radius: 50%; background: conic-gradient(from 0deg, #fdbc40 0 30deg, #ff8f3f 30deg 90deg, #f05f5f 90deg 150deg, #8a4ff5 150deg 210deg, #17b1cf 210deg 270deg, #4fce86 270deg 330deg, #fdbc40 330deg); }
.pcombos { display: flex; flex-direction: column; gap: 2px; padding-top: 2px; width: 171px; }
.pcombos .combo { height: 28px; padding: 0 2px 0 4px; gap: 3px; }
.pcombos .sw { width: 20px; height: 20px; margin: 0 9px 0 10px; border-color: #d0d4da; }
.ln { width: 80px; height: 1px; background: #fff; }
.groups { width: 85px; }
.groups .big { width: 51px; }
.groups .rows { margin-left: 1px; }
.groups .on { background: #45597a; outline: 1px solid #6ebeff; outline-offset: -1px; height: 28px; width: 29px; margin: 1px 0 0 -1px; padding-left: 2px; }
.utils { width: 121px; }
.utils .big { width: 88px; }
.utils .rows { margin-left: 1px; }
.clip { width: 99px; }
.clip .big { width: 67px; padding-top: 3px; }
.view { width: 92px; border-right: 0; }
.view .big { width: 78px; }
.view .name { padding-right: 33px; }
.view .launch { right: 19px; }

/* file tabs */
.filetabs { height: 37px; flex: none; display: flex; align-items: flex-start; padding: 4px 0 0 20px; border-bottom: 5px solid #3b4453; }
.ft { height: 28px; display: flex; align-items: center; padding-top: 1px; }
.start { width: 160px; background: #2f3743; color: #b9bdc2; padding-left: 19px; clip-path: path("M0 28C6 26 3 0 12 0H148C158 0 156 26 160 28Z"); }
.cur { width: 158px; background: #3b4453; color: #fff; margin-left: -2px; padding-left: 15px; letter-spacing: -0.55px; clip-path: path("M0 28C6 26 3 1 12 1H142C154 1 152 26 158 28Z"); }
.cur b { width: 114px; }
.cur .x { width: 10px; height: 10px; }
.add { width: 26px; height: 19px; background: #2f3743; border-radius: 5px 14px 2px 12px; margin: 6px 0 0 7px; justify-content: center; }
.add .x { width: 9px; height: 9px; }

/* drawing area */
.stage { height: 741px; flex: none; background: #212830; position: relative; }
.drawing { width: 1920px; height: 741px; fill: none; }
.vplabel { position: absolute; left: 2px; top: 5px; letter-spacing: -0.28px; }
.vpctl { position: absolute; left: 1846px; top: 10px; display: flex; gap: 10px; }
.vpctl svg { width: 14px; height: 14px; stroke: #e8e8e8; fill: none; }
.cube { position: absolute; left: 1765px; top: 44px; width: 140px; height: 140px; color: #b0b3b6; font: bold 22px/24px "Liberation Sans", sans-serif; letter-spacing: 0; }
.ring { position: absolute; inset: 8px; border: 13px solid #42474f; border-radius: 50%; }
.cube b { position: absolute; width: 24px; text-align: center; }
.n { left: 58px; top: 1px; }
.s { left: 58px; top: 117px; }
.w { left: 0; top: 59px; }
.e { left: 116px; top: 59px; }
.face { position: absolute; left: 43px; top: 43px; width: 54px; height: 54px; background: #b0b1b3; border: 1px solid #8a8c90; display: flex; }
.face span { flex: 1; margin: 9px; background: #a0a6ab; color: #4c525c; font: bold 13px/34px "Open Sans", sans-serif; letter-spacing: -0.8px; text-align: center; }
.wcs { position: absolute; left: 1805px; top: 205px; width: 57px; height: 21px; border-radius: 5px; background: #999ba8; border: 1px solid #7f8190; color: #4e515b; font: 13px/20px "Liberation Sans", sans-serif; letter-spacing: 0; padding-left: 4px; display: flex; align-items: center; gap: 6px; }
.wcs svg { width: 12px; height: 7px; fill: #a8aab6; stroke: #777a86; }
.navbar { position: absolute; left: 1877.5px; top: 256px; width: 40px; height: 259px; }
.cmd { position: absolute; left: 386px; top: 707px; width: 1147px; height: 34px; background: #2a313d; display: flex; align-items: center; border-radius: 3px 0 0 0; }
.grip { width: 7px; height: 22px; margin-left: 4px; stroke: #b0b3b8; stroke-width: 2; stroke-dasharray: 2 2.400; }
.cmd > .x { width: 12px; height: 12px; margin-left: 7px; }
.wrench { width: 20px; height: 20px; margin-left: 14px; }
.prompt { width: 1077px; height: 32px; margin-left: 6px; flex: none; background: #bcbdbf; border-radius: 3px; display: flex; align-items: center; color: #5b5e62; font: italic 15px/20px "DejaVu Sans Mono", monospace; letter-spacing: 0; padding-left: 5px; }
.term { width: 20px; height: 16px; fill: none; }
.prompt .cr { margin-left: 2px; }
.prompt span { margin-left: 8px; }
.prompt .cr.up { margin: 0 7px 0 auto; width: 8px; height: 5px; }

/* layout tabs and status bar */
.bottom { height: 59px; flex: none; border-top: 1px solid #474e5c; display: flex; flex-direction: column; }
.laytabs { height: 26px; display: flex; color: #b9bdc2; line-height: 21px; padding-left: 14px; }
.laytabs b, .laytabs span { height: 23px; text-align: center; background: #2f3743; width: 81px; clip-path: path("M0 0H81C76 3 77 23 69 23H11C4 23 5 3 0 0Z"); }
.laytabs b { width: 73px; background: #3b4453; color: #fff; letter-spacing: -0.55px; clip-path: path("M0 0H73C68 3 69 23 62 23H10C4 23 5 3 0 0Z"); }
.laytabs em { width: 27px; height: 20px; margin: 1px 0 0 5px; background: #2f3743; border-radius: 12px 2px 14px 3px; display: flex; align-items: center; justify-content: center; }
.laytabs em .x { width: 10px; height: 10px; }
.status { height: 30px; display: grid; padding-left: 1241px;
  grid-template-columns: 62px 29px 55px 28px 103px 30px 29px 23px 29px 106px 51px 33px 33px 7px 61px; }
.status > div { background: #3b4453; display: flex; align-items: center; justify-content: center; }
.status > .hot { background: #5f8fc4; }
.hot .i { stroke: #fff; }
.status .s1 { margin-right: 3px; }
.status .s3 { margin-right: 4px; gap: 9px; }
.status .s5 { margin-right: 2px; gap: 8px; justify-content: flex-start; padding-left: 3px; }
.status .s6 { margin-right: 2px; }
.status .s7 { padding-right: 2px; }
.status .s8 { margin-right: 3px; }
.status .s10 { margin-right: 2px; gap: 5px; }
.status .s11 { margin-right: 1px; gap: 8px; padding-right: 3px; }
.status .s12, .status .s13, .status .s14 { margin-right: 3px; }
.status .s13 { padding-right: 2px; }
.status .s15 { gap: 6px; padding-right: 1px; }

/* taskbar */
.taskbar { height: 60px; flex: none; background: #eee; border-top: 1px solid #c4c4c4; color: #222; display: flex; align-items: center; }
.weather { width: 558px; display: flex; padding-left: 27px; gap: 2px; height: 59px; padding-top: 7px; }
.weather svg { width: 34px; height: 36px; }
.weather div { display: flex; flex-direction: column; padding-top: 1px; }
.weather small { font-size: 15px; color: #666; white-space: nowrap; letter-spacing: -.1px; }
.weather text { font-size: 14px; fill: #fff; text-anchor: middle; }
.win { width: 29px; height: 29px; }
.search { width: 273px; height: 38px; margin-left: 17px; background: #fbfbfb; border: 1px solid #d4d4d4; border-radius: 19px; display: flex; align-items: center; color: #555; flex: none; }
.search span { font-size: 16px; margin-top: -2px; letter-spacing: -0.25px; }
.mag { width: 20px; height: 20px; margin: 0 11px 0 13px; fill: none; stroke: #222; stroke-width: 2; }
.uni { width: 54px; height: 34px; margin: 0 6px 0 auto; }
.apps { display: flex; margin-left: 4px; }
.apps > div { width: 55px; height: 58px; display: flex; align-items: center; justify-content: center; position: relative; }
.apps svg { width: 32px; height: 32px; position: relative; z-index: 1; }
.tm { font: bold 12px "Open Sans", sans-serif; fill: #4b53bc; text-anchor: middle; }
.apps u { position: absolute; z-index: 2; left: 29px; top: 8px; width: 20px; height: 20px; border-radius: 50%; background: #9f45b5; color: #f3e3f7; font-size: 12px; font-weight: 600; text-align: center; text-decoration: none; letter-spacing: 0; }
.apps .bt { background: #23808f; color: #fff; font-size: 15px; font-weight: 400; }
.apps s { position: absolute; z-index: 2; left: 24px; bottom: 4px; width: 8px; height: 4px; border-radius: 2px; background: #8a8a8a; }
.apps .act::before { content: ""; position: absolute; left: 3px; top: 5px; width: 49px; height: 49px; background: #f8f8f8; border: 1px solid #e2e2e2; border-radius: 5px; }
.apps .act s { left: 18px; width: 20px; background: #23808f; }
.tray { display: grid; align-items: center; margin-left: 170px; width: 374px; height: 58px; text-align: center;
  grid-template-columns: 14px 68px 41px 16px 46px 84px 38px 54px; }
.tray svg { stroke: #222; stroke-width: 1.6; fill: none; justify-self: center; }
.t1 { width: 14px; height: 9px; }
.t2 { width: 20px; height: 18px; }
.t3 { width: 20px; height: 18px; }
.t4 { width: 21px; height: 14px; }
.tray .t5 { width: 16px; height: 19px; fill: #174b5c; stroke: none; }
.lang { padding-left: 14px; line-height: 20px; }
.clock { text-align: right; line-height: 20px; white-space: nowrap; }
.copilot { position: relative; width: 30px; height: 38px; justify-self: center; }
.tray .copilot svg { width: 28px; height: 28px; stroke: none; }
.copilot span { position: absolute; left: 7px; top: 24px; width: 22px; height: 13px; background: #f9c20a; color: #111; border-radius: 3px; font: bold 10px/13px "Open Sans", sans-serif; letter-spacing: 0; text-align: center; }
```
